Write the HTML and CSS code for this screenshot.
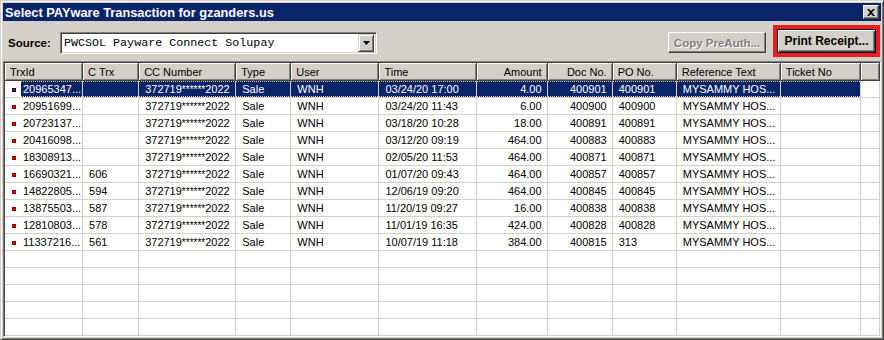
FILE: index.html
```html
<!DOCTYPE html>
<html>
<head>
  <meta charset="UTF-8">
  <title>Select PAYware Transaction</title>
  <link rel="stylesheet" href="styles.css">
</head>
<body>
  <div class="window">
    <!-- title bar -->
    <div class="titlebar">
      <span class="title">Select PAYware Transaction for gzanders.us</span>
      <span class="close-btn">
        <svg width="8" height="7" viewBox="0 0 8 7">
          <path d="M0 0h2l2 2 2-2h2L5 3.5 8 7H6L4 5 2 7H0l3-3.5z" fill="#000"/>
        </svg>
      </span>
    </div>

    <!-- source selector and buttons -->
    <div class="toolbar">
      <label class="source-label">Source:</label>
      <div class="combo">
        <span class="combo-text">PWCSOL Payware Connect Solupay</span>
        <span class="combo-btn">
          <svg width="7" height="4" viewBox="0 0 7 4"><path d="M0 0h7L3.5 4z" fill="#000"/></svg>
        </span>
      </div>
      <div class="spacer"></div>
      <button class="btn disabled">Copy PreAuth...</button>
      <button class="btn default marked">Print Receipt...</button>
    </div>

    <!-- transaction list -->
    <div class="listview">
      <table class="grid">
        <colgroup>
          <col style="width:78px"><col style="width:56px"><col style="width:97px"><col style="width:55px">
          <col style="width:88px"><col style="width:97px"><col style="width:71px"><col style="width:65px">
          <col style="width:64px"><col style="width:104px"><col style="width:80px"><col style="width:19px">
        </colgroup>
        <thead>
          <tr>
            <th>TrxId</th>
            <th>C Trx</th>
            <th>CC Number</th>
            <th>Type</th>
            <th>User</th>
            <th>Time</th>
            <th class="num">Amount</th>
            <th class="num">Doc No.</th>
            <th>PO No.</th>
            <th>Reference Text</th>
            <th>Ticket No</th>
            <th></th>
          </tr>
        </thead>
        <tbody id="rows"></tbody>
      </table>
    </div>
  </div>

  <script>
    // transactions shown in the list
    const records = [
      ["20965347...", "", "4.00", "400901", "400901", "03/24/20 17:00"],
      ["20951699...", "", "6.00", "400900", "400900", "03/24/20 11:43"],
      ["20723137...", "", "18.00", "400891", "400891", "03/18/20 10:28"],
      ["20416098...", "", "464.00", "400883", "400883", "03/12/20 09:19"],
      ["18308913...", "", "464.00", "400871", "400871", "02/05/20 11:53"],
      ["16690321...", "606", "464.00", "400857", "400857", "01/07/20 09:43"],
      ["14822805...", "594", "464.00", "400845", "400845", "12/06/19 09:20"],
      ["13875503...", "587", "16.00", "400838", "400838", "11/20/19 09:27"],
      ["12810803...", "578", "424.00", "400828", "400828", "11/01/19 16:35"],
      ["11337216...", "561", "384.00", "400815", "313", "10/07/19 11:18"]
    ];

    const tbody = document.getElementById("rows");

    records.forEach((r, i) => {
      const row = document.createElement("tr");
      if (i === 0) row.className = "selected";
      row.innerHTML = `
        <td class="first"><span class="icon"></span><span class="label">${r[0]}</span></td>
        <td class="sel">${r[1]}</td>
        <td class="sel">372719<span class="stars">******</span>2022</td>
        <td class="sel">Sale</td>
        <td class="sel">WNH</td>
        <td class="sel">${r[5]}</td>
        <td class="sel num">${r[2]}</td>
        <td class="sel num">${r[3]}</td>
        <td class="sel">${r[4]}</td>
        <td class="sel">MYSAMMY HOS...</td>
        <td class="sel"></td>
        <td></td>
      `;
      tbody.appendChild(row);
    });

    // empty rows to fill the list
    for (let i = 0; i < 6; i++) {
      const row = document.createElement("tr");
      row.innerHTML = "<td></td>".repeat(12);
      tbody.appendChild(row);
    }
  </script>
</body>
</html>
```

FILE: styles.css
```css
body {
  margin: 0;
  font-family: "Liberation Sans", Arial, sans-serif;
  font-size: 11px;
}
.window {
  width: 884px;
  height: 340px;
  box-sizing: border-box;
  background-color: #d4d0c8;
  border: 1px solid;
  border-color: #d4d0c8 #404040 #404040 #d4d0c8;
  box-shadow: inset 1px 1px #fff, inset -1px -1px #808080;
  padding: 2px;
  display: flex;
  flex-direction: column;
  overflow: hidden;
}
.titlebar {
  height: 18px;
  flex: none;
  background-color: #0a246a;
  color: #fff;
  display: flex;
  align-items: center;
  padding: 0 2px 0 2px;
}
.title {
  font-weight: bold;
  font-size: 12.8px;
  flex: 1;
}
.close-btn {
  width: 16px;
  height: 14px;
  box-sizing: border-box;
  background-color: #d4d0c8;
  border: 1px solid;
  border-color: #fff #404040 #404040 #fff;
  box-shadow: inset -1px -1px #808080;
  display: flex;
  align-items: center;
  justify-content: center;
}
.toolbar {
  height: 40px;
  flex: none;
  display: flex;
  align-items: flex-start;
  padding: 0 5px 0 5px;
}
.source-label {
  width: 52px;
  margin-top: 11px;
  line-height: 22px;
  font-weight: bold;
  font-size: 11.5px;
}
.combo {
  width: 317px;
  height: 22px;
  margin-top: 11px;
  box-sizing: border-box;
  background-color: #fff;
  border: 1px solid;
  border-color: #808080 #fff #fff #808080;
  box-shadow: inset 1px 1px #404040, inset -1px -1px #d4d0c8;
  display: flex;
  align-items: center;
  padding: 2px;
}
.combo-text {
  flex: 1;
  font-family: "Liberation Mono", "Courier New", monospace;
  font-size: 11.7px;
  padding-left: 1px;
}
.combo-btn {
  width: 16px;
  height: 18px;
  box-sizing: border-box;
  background-color: #d4d0c8;
  border: 1px solid;
  border-color: #d4d0c8 #404040 #404040 #d4d0c8;
  box-shadow: inset 1px 1px #fff, inset -1px -1px #808080;
  display: flex;
  align-items: center;
  justify-content: center;
}
.spacer {
  flex: 1;
}
.btn {
  font-family: "Liberation Sans", Arial, sans-serif;
  font-size: 11.5px;
  font-weight: bold;
  background-color: #d4d0c8;
  border: 1px solid;
  border-color: #fff #404040 #404040 #fff;
  box-shadow: inset -1px -1px #808080;
  padding: 0;
  box-sizing: border-box;
}
.btn.disabled {
  width: 98px;
  height: 21px;
  margin-top: 11px;
  color: #808080;
  text-shadow: 1px 1px #fff;
}
.btn.default {
  width: 99px;
  height: 24px;
  margin-top: 8px;
  margin-left: 11px;
  font-size: 12px;
  border: 1px solid #000;
  box-shadow: inset 1px 1px #fff, inset -1px -1px #404040, inset -2px -2px #808080;
}
.btn.marked {
  outline: 4px solid #ed1c24;
}
.listview {
  flex: 1;
  margin-top: 0;
  background-color: #fff;
  border: 1px solid;
  border-color: #808080 #fff #fff #808080;
  box-shadow: inset 1px 1px #404040;
  padding: 1px 0 0 1px;
  overflow: hidden;
}
.grid {
  table-layout: fixed;
  border-collapse: separate;
  border-spacing: 0;
  width: 875px;
}
.grid th {
  height: 18px;
  box-sizing: border-box;
  background-color: #d4d0c8;
  font-weight: normal;
  text-align: left;
  padding: 0 5px;
  border-right: 1px solid #404040;
  border-bottom: 1px solid #404040;
  box-shadow: inset 1px 1px #fff, inset -1px -1px #808080;
  white-space: nowrap;
  overflow: hidden;
}
.grid td {
  height: 17px;
  box-sizing: border-box;
  padding: 0 6px;
  border-right: 1px solid #d4d0c8;
  border-bottom: 1px solid #d4d0c8;
  white-space: nowrap;
  overflow: hidden;
}
.grid .num {
  text-align: right;
  padding-right: 5px;
}
.grid td.first {
  padding: 0;
}
.stars {
  font-size: 10px;
}
.icon {
  display: inline-block;
  width: 4px;
  height: 4px;
  box-sizing: border-box;
  background-color: #ff0000;
  border: 1px solid #900000;
  margin: 0 5px 0 7px;
  vertical-align: 1px;
}
.label {
  display: inline-block;
  line-height: 16px;
  padding-left: 2px;
  width: 61px;
}
.selected .sel,
.selected .label {
  background-color: #0a246a;
  color: #fff;
  background-image: linear-gradient(to right, #d8c890 50%, transparent 50%),
                    linear-gradient(to right, #d8c890 50%, transparent 50%);
  background-size: 2px 1px;
  background-position: left top, left bottom;
  background-repeat: repeat-x;
}
.selected .icon {
  background-color: #503070;
  border-color: #200030;
}
```
